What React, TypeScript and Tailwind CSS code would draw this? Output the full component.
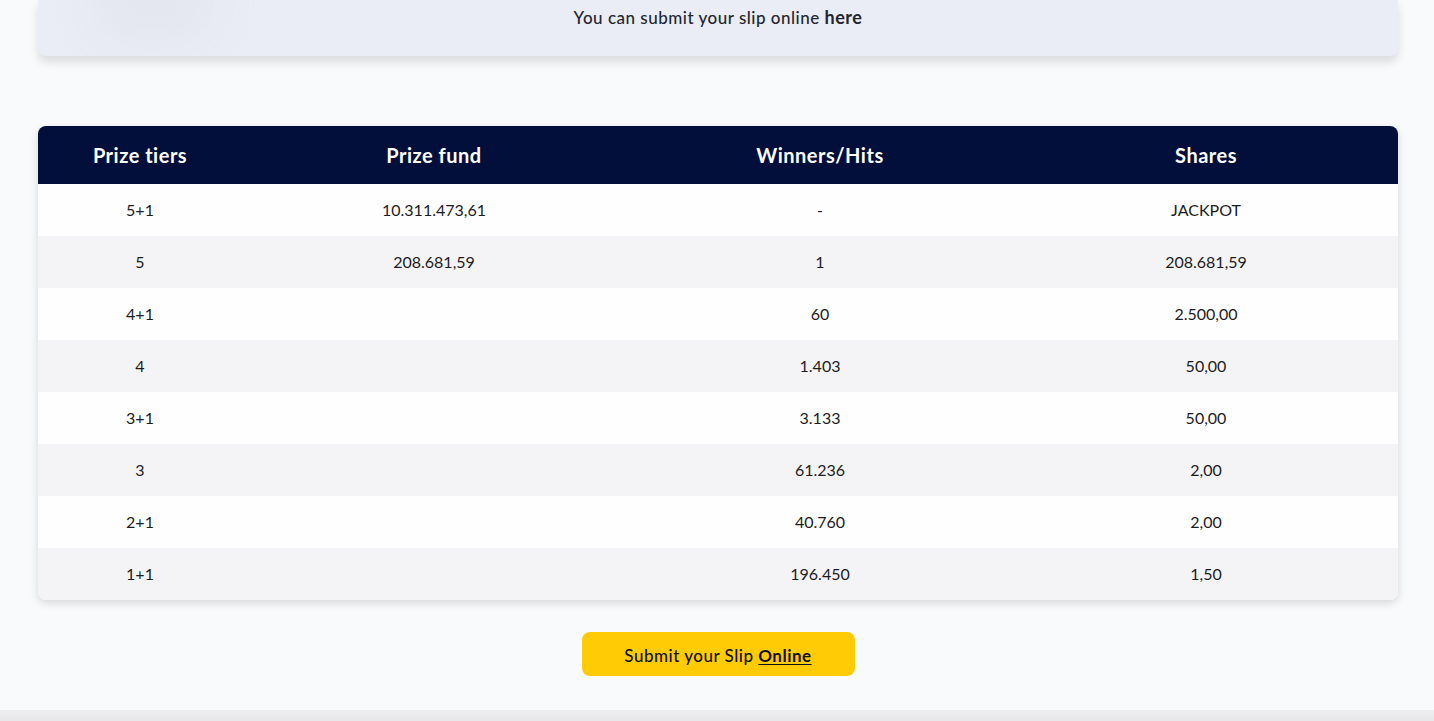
const rows = [
  { tier: '5+1', fund: '10.311.473,61', hits: '-', share: 'JACKPOT' },
  { tier: '5', fund: '208.681,59', hits: '1', share: '208.681,59' },
  { tier: '4+1', fund: '', hits: '60', share: '2.500,00' },
  { tier: '4', fund: '', hits: '1.403', share: '50,00' },
  { tier: '3+1', fund: '', hits: '3.133', share: '50,00' },
  { tier: '3', fund: '', hits: '61.236', share: '2,00' },
  { tier: '2+1', fund: '', hits: '40.760', share: '2,00' },
  { tier: '1+1', fund: '', hits: '196.450', share: '1,50' },
];

const cols = 'grid grid-cols-[204px_384px_388px_1fr]';

export default function App() {
  return (
    <div className="min-h-screen bg-[#f9fafc] font-['Lato',sans-serif] text-[#1c1c22] overflow-hidden">
      <div className="pl-[38px] pr-[36px]">
        {/* Info card */}
        <div className="relative h-[56px] rounded-b-lg bg-[#eaedf5] shadow-[0_6px_10px_rgba(0,0,0,0.12)] overflow-hidden">
          <div className="absolute left-[55px] -top-[30px] w-[120px] h-[70px] rounded-full bg-[#dfe2ec] blur-xl opacity-70" />
          <p className="relative pt-[4px] text-center text-[17px] font-medium text-[#23262f] tracking-[0.5px]">
            You can submit your slip online <span className="font-bold text-[18px]">here</span>
          </p>
        </div>

        {/* Prize table */}
        <div className="mt-[70px] rounded-lg overflow-hidden bg-white shadow-[0_3px_8px_rgba(0,0,0,0.14)]">
          <div className={`${cols} h-[58px] items-center bg-[#020f3a] text-white text-[20px] font-bold tracking-[0.5px]`}>
            <div className="text-center">Prize tiers</div>
            <div className="text-center">Prize fund</div>
            <div className="text-center">Winners/Hits</div>
            <div className="text-center">Shares</div>
          </div>
          {rows.map((r, i) => (
            <div
              key={r.tier}
              className={`${cols} h-[52px] items-center text-[16px] ${i % 2 === 0 ? 'bg-[#fefeff]' : 'bg-[#f4f4f6]'}`}
            >
              <div className="text-center">{r.tier}</div>
              <div className="text-center">{r.fund}</div>
              <div className="text-center">{r.hits}</div>
              <div className="text-center">{r.share}</div>
            </div>
          ))}
        </div>

        {/* Button */}
        <div className="mt-[32px] flex justify-center">
          <button className="w-[273px] h-[44px] pt-[3px] rounded-lg bg-[#ffcb05] text-[17px] font-medium text-[#111] tracking-[0.5px]">
            Submit your Slip <span className="font-bold underline underline-offset-2">Online</span>
          </button>
        </div>
      </div>

      <div className="mt-[34px] h-[20px] bg-gradient-to-b from-[#eeeef0] to-[#e2e2e4]" />
    </div>
  );
}
